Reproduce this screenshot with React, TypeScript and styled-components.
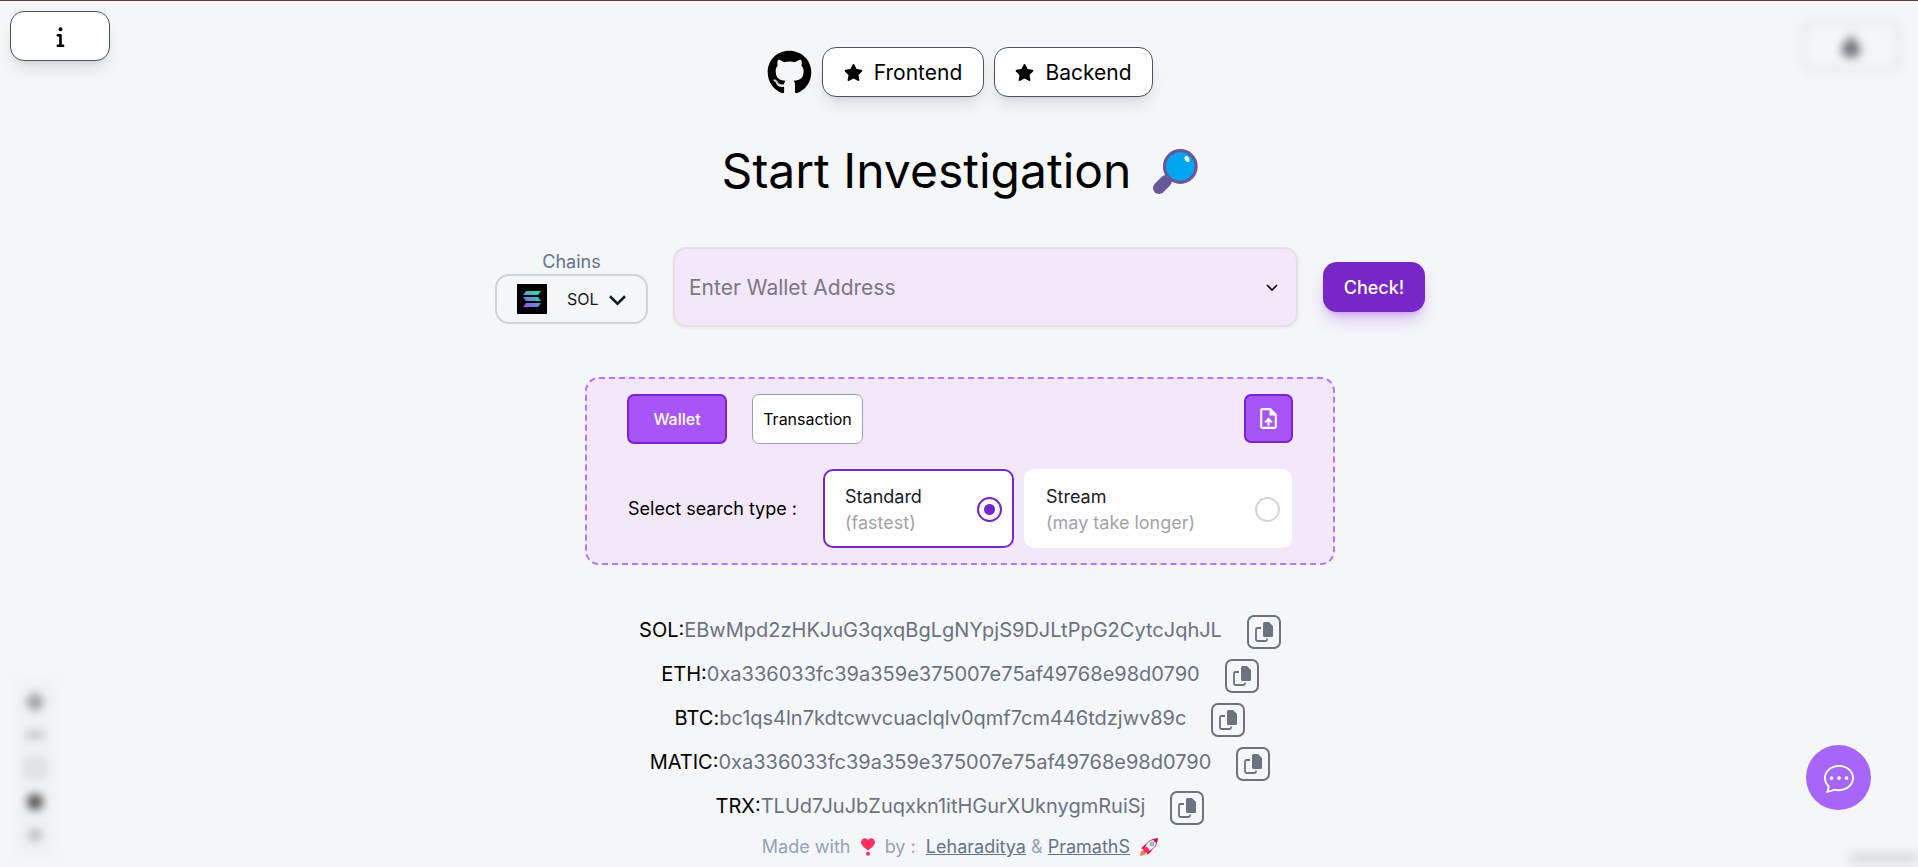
import React, { useState } from "react";
import styled, { createGlobalStyle, css } from "styled-components";
import { FaGithub, FaStar } from "react-icons/fa";
import { FaInfo } from "react-icons/fa6";
import { MdUploadFile } from "react-icons/md";
import { BsChatDots } from "react-icons/bs";

const GlobalStyle = createGlobalStyle`
  *, *::before, *::after { box-sizing: border-box; }
  body {
    margin: 0;
    background: #f4f6f8;
    color: #000;
    font-family: Inter, "Liberation Sans", sans-serif;
  }
  button, input, select { font: inherit; color: inherit; }
  svg { display: block; flex: none; }
`;

const Page = styled.div`
  position: relative;
  min-height: 100vh;
  overflow: hidden;
  border-top: 1px solid #5a3e42;
`;

const Canvas = styled.div`
  position: absolute;
  inset: 0;
  filter: blur(5px);
  pointer-events: none;
`;

const CanvasControls = styled.div`
  position: absolute;
  left: 15px;
  bottom: 10px;
  width: 40px;
  padding: 14px 0;
  display: flex;
  flex-direction: column;
  align-items: center;
  gap: 16px;
  background: #f1f2f4;
`;

const CanvasButton = styled.div`
  position: absolute;
  top: 18px;
  right: 16px;
  width: 102px;
  height: 54px;
  border-radius: 14px;
  border: 6px solid #ebecef;
  display: flex;
  align-items: center;
  justify-content: center;
`;

const CanvasCredit = styled.div`
  position: absolute;
  right: 0;
  bottom: 4px;
  width: 68px;
  height: 10px;
  background: #d9dadd;
`;

const raised = css`
  border: 1px solid #475569;
  border-radius: 14px;
  background: #fff;
  box-shadow: 0 10px 15px -3px rgba(0, 0, 0, 0.1), 0 4px 6px -4px rgba(0, 0, 0, 0.1);
  cursor: pointer;
`;

const InfoButton = styled.button`
  ${raised}
  position: absolute;
  top: 10px;
  left: 10px;
  width: 100px;
  height: 50px;
  display: flex;
  align-items: center;
  justify-content: center;
`;

const ChatButton = styled.button`
  position: absolute;
  right: 47px;
  bottom: 57px;
  width: 65px;
  height: 65px;
  border: 0;
  border-radius: 50%;
  background: #a666fa;
  color: #fff;
  display: flex;
  align-items: center;
  justify-content: center;
  cursor: pointer;
`;

const Main = styled.main`
  position: relative;
  display: flex;
  flex-direction: column;
  align-items: center;
  padding: 46px 0 0 2px;
`;

const RepoBar = styled.nav`
  display: flex;
  align-items: center;
  gap: 10px;
`;

const RepoLink = styled.a<{ $width: number }>`
  ${raised}
  width: ${(p) => p.$width}px;
  height: 50px;
  display: flex;
  align-items: center;
  justify-content: center;
  gap: 11px;
  color: #000;
  font-size: 21px;
  text-decoration: none;
`;

const Title = styled.h1`
  margin: 38px 0 0;
  display: flex;
  align-items: center;
  gap: 22px;
  font-size: 48px;
  line-height: 72px;
  font-weight: 400;
`;

const SearchForm = styled.form`
  margin-top: 40px;
  display: flex;
  align-items: center;
  gap: 25px;
`;

const ChainField = styled.div`
  display: flex;
  flex-direction: column;
  align-items: center;
  color: #64748b;
`;

const ChainLabel = styled.label`
  font-size: 18px;
  line-height: 24px;
`;

const ChainBox = styled.div`
  width: 153px;
  height: 50px;
  padding: 0 20px;
  display: flex;
  align-items: center;
  border: 2px solid #d2d3d6;
  border-radius: 14px;
  color: #111827;
`;

const ChainSelect = styled.select`
  width: 42px;
  margin: 0 0 0 20px;
  padding: 0;
  border: 0;
  background: none;
  appearance: none;
  font-size: 16px;
  outline: none;
`;

const AddressBox = styled.div`
  width: 625px;
  height: 80px;
  padding: 0 16px 0 14px;
  display: flex;
  align-items: center;
  background: #f2e8fa;
  border: 2px solid #e3e1e6;
  border-radius: 14px;
  box-shadow: 0 1px 3px rgba(0, 0, 0, 0.08);
`;

const AddressInput = styled.input`
  flex: 1;
  min-width: 0;
  padding: 0;
  border: 0;
  outline: none;
  background: none;
  font-size: 21px;
  &::placeholder { color: #7a7880; opacity: 1; }
`;

const HistoryButton = styled.button`
  width: 16px;
  height: 32px;
  padding: 0;
  border: 0;
  background: none;
  display: flex;
  align-items: center;
  justify-content: center;
`;

const CheckButton = styled.button`
  width: 102px;
  height: 50px;
  padding: 0;
  border: 0;
  border-radius: 14px;
  background: #7726c8;
  color: #fff;
  font-size: 18px;
  font-weight: 500;
  box-shadow: 0 10px 15px -3px rgba(147, 51, 234, 0.3), 0 4px 6px -4px rgba(147, 51, 234, 0.4);
  cursor: pointer;
`;

const Panel = styled.section`
  margin-top: 50px;
  width: 750px;
  padding: 15px 40px;
  display: flex;
  flex-direction: column;
  gap: 25px;
  background: #f2e8fa;
  border: 2px dashed #b975fa;
  border-radius: 14px;
`;

const PanelRow = styled.div`
  display: flex;
  align-items: center;
`;

const ModeButton = styled.button<{ $active?: boolean; $width: number }>`
  width: ${(p) => p.$width}px;
  height: 50px;
  margin-right: 25px;
  padding: 0;
  border-radius: 7px;
  border: ${(p) => (p.$active ? "2px solid #7e22ce" : "1px solid #94a3b8")};
  background: ${(p) => (p.$active ? "#a855f7" : "#fff")};
  color: ${(p) => (p.$active ? "#fff" : "#000")};
  font-size: 16px;
  font-weight: ${(p) => (p.$active ? 500 : 400)};
  cursor: pointer;
`;

const UploadButton = styled.button`
  width: 49px;
  height: 49px;
  margin-left: auto;
  align-self: flex-start;
  padding: 0;
  display: flex;
  align-items: center;
  justify-content: center;
  border: 2px solid #7e22ce;
  border-radius: 7px;
  background: #a855f7;
  color: #fff;
  cursor: pointer;
`;

const TypeLegend = styled.span`
  width: 196px;
  padding-left: 1px;
  font-size: 18px;
`;

const TypeOption = styled.label<{ $active: boolean; $width: number }>`
  width: ${(p) => p.$width}px;
  height: 79px;
  padding: 2px 10px 0 20px;
  display: flex;
  align-items: center;
  justify-content: space-between;
  border: 2px solid ${(p) => (p.$active ? "#7726c8" : "#fff")};
  border-radius: 10px;
  background: #fff;
  color: #1a2029;
  font-size: 18px;
  line-height: 26px;
  & + & { margin-left: 10px; }
`;

const TypeHint = styled.span`
  display: block;
  color: #a3a2aa;
`;

const Radio = styled.input`
  appearance: none;
  width: 25px;
  height: 25px;
  margin: 0;
  border: 2px solid #d4d4d8;
  border-radius: 50%;
  &:checked {
    border-color: #7726c8;
    background: radial-gradient(circle, #7726c8 5px, #fff 6px);
  }
`;

const WalletList = styled.ul`
  margin: 50px 0 0;
  padding: 0;
  list-style: none;
  display: flex;
  flex-direction: column;
  align-items: center;
  gap: 10px;
`;

const WalletRow = styled.li`
  height: 34px;
  display: flex;
  gap: 25px;
  font-size: 20px;
  line-height: 30px;
`;

const WalletAddress = styled.span`
  color: #6b7280;
`;

const CopyButton = styled.button`
  width: 34px;
  height: 34px;
  padding: 0;
  display: flex;
  align-items: center;
  justify-content: center;
  border: 2px solid #6b7280;
  border-radius: 7px;
  background: none;
  color: #6b7280;
  cursor: pointer;
`;

const Footer = styled.footer`
  margin-top: 8px;
  display: flex;
  align-items: center;
  color: #94a3b8;
  font-size: 18px;
  line-height: 28px;
  white-space: pre;
`;

const AuthorLink = styled.a`
  color: #64748b;
  text-decoration: underline;
`;

const Magnifier = () => (
  <svg width="45" height="45" viewBox="0 0 45 45" aria-hidden="true">
    <path d="M6 39 L13 32" stroke="#66589b" strokeWidth="12" strokeLinecap="round" />
    <path d="M13 32 L21 24" stroke="#66589b" strokeWidth="5" />
    <circle cx="27.300" cy="17.500" r="15.800" fill="#00a6ed" stroke="#66589b" strokeWidth="3.200" />
    <ellipse cx="34" cy="10" rx="2.200" ry="3.200" fill="#fff" transform="rotate(-30 34 10)" />
  </svg>
);

const SolanaLogo = () => (
  <svg width="30" height="30" viewBox="0 0 30 30" aria-hidden="true">
    <defs>
      <linearGradient id="sol" x1="8" y1="24" x2="22" y2="6" gradientUnits="userSpaceOnUse">
        <stop offset="0" stopColor="#9945ff" />
        <stop offset="0.5" stopColor="#5a9bd0" />
        <stop offset="1" stopColor="#14f195" />
      </linearGradient>
    </defs>
    <rect width="30" height="30" fill="#000" />
    <path fill="url(#sol)" d="M9 7h15l-3 4H6zM6 13h15l3 4H9zM9 19h15l-3 4H6z" />
  </svg>
);

const CopyIcon = () => (
  <svg width="20" height="22" viewBox="0 0 20 22" aria-hidden="true">
    <path d="M10.500 1h4.500l4 4v9.500a1.500 1.500 0 0 1-1.500 1.500h-7A1.500 1.500 0 0 1 9 14.500v-12A1.500 1.500 0 0 1 10.500 1z" fill="currentColor" />
    <path d="M7 7H3.500a1.500 1.500 0 0 0-1.500 1.500v10a1.500 1.500 0 0 0 1.500 1.500h8a1.500 1.500 0 0 0 1.500-1.500V17.500" fill="none" stroke="currentColor" strokeWidth="1.800" />
  </svg>
);

const Heart = () => (
  <svg width="14" height="18" viewBox="0 0 14 18" aria-hidden="true">
    <path d="M7 12.500C4 10 0 7.500 0 4A3.800 3.800 0 0 1 7 2a3.800 3.800 0 0 1 7 2c0 3.500-4 6-7 8.500z" fill="#ff2f5f" />
    <circle cx="7" cy="15.800" r="2" fill="#ff2f5f" />
  </svg>
);

const Rocket = () => (
  <svg width="18" height="18" viewBox="0 0 18 18" aria-hidden="true">
    <path d="M1 10.500l4-4 3 .500-4 4zM7.500 17l4-4-.500-3-4 4z" fill="#ca0b4a" />
    <path d="M0 18l1-5 3-1 2 3-1.500 2z" fill="#ff8257" />
    <path d="M4 11C6 5 10 1 17 1c0 7-4 11-10 13z" fill="#f4f4f6" stroke="#ca0b4a" strokeWidth="0.800" />
    <path d="M12.500 1.500L18 0l-1.500 5.500z" fill="#ca0b4a" />
    <path d="M3 11l3.500-2.500 3 3L7 15l-3-1z" fill="#f92f60" />
    <circle cx="12" cy="6" r="2" fill="#86c9e8" stroke="#6f8fb0" strokeWidth="0.600" />
  </svg>
);

const Chevron = ({ width, stroke }: { width: number; stroke: number }) => (
  <svg width={width} height={width} viewBox={`0 0 ${width} ${width}`} aria-hidden="true">
    <path
      d={`M1 ${width / 4 + 1}L${width / 2} ${(width * 3) / 4}L${width - 1} ${width / 4 + 1}`}
      fill="none"
      stroke="currentColor"
      strokeWidth={stroke}
    />
  </svg>
);

const wallets = [
  { chain: "SOL", address: "EBwMpd2zHKJuG3qxqBgLgNYpjS9DJLtPpG2CytcJqhJL" },
  { chain: "ETH", address: "0xa336033fc39a359e375007e75af49768e98d0790" },
  { chain: "BTC", address: "bc1qs4ln7kdtcwvcuaclqlv0qmf7cm446tdzjwv89c" },
  { chain: "MATIC", address: "0xa336033fc39a359e375007e75af49768e98d0790" },
  { chain: "TRX", address: "TLUd7JuJbZuqxkn1itHGurXUknygmRuiSj" },
];

const searchTypes = [
  { id: "standard", name: "Standard", hint: "(fastest)", width: 191 },
  { id: "stream", name: "Stream", hint: "(may take longer)", width: 268 },
];

export default function App() {
  const [type, setType] = useState("standard");
  return (
    <>
      <GlobalStyle />
      <Page>
        <Canvas aria-hidden="true">
          <CanvasButton>
            <svg width="20" height="22" viewBox="0 0 20 22"><path d="M10 0l10 14-4 8H4l-4-8z" fill="#6a6f73" /></svg>
          </CanvasButton>
          <CanvasControls>
            <svg width="18" height="18" viewBox="0 0 18 18"><path d="M6 0h6v6h6v6h-6v6H6v-6H0V6h6z" fill="#8c8d90" /></svg>
            <svg width="18" height="16" viewBox="0 0 18 16"><path d="M0 5h18v6H0z" fill="#b4b5b8" /></svg>
            <svg width="20" height="18" viewBox="0 0 20 18"><path d="M2 2h16v14H2z" fill="none" stroke="#cbccd0" strokeWidth="4" /></svg>
            <svg width="18" height="18" viewBox="0 0 18 18"><circle cx="9" cy="9" r="8" fill="#4c4c4c" /></svg>
            <svg width="16" height="16" viewBox="0 0 16 16"><circle cx="8" cy="8" r="7" fill="#bbbcbf" /></svg>
          </CanvasControls>
          <CanvasCredit />
        </Canvas>

        <Main>
          <RepoBar>
            <FaGithub size={45} />
            <RepoLink href="#frontend" $width={162}><FaStar size={19} />Frontend</RepoLink>
            <RepoLink href="#backend" $width={159}><FaStar size={19} />Backend</RepoLink>
          </RepoBar>

          <Title>Start Investigation <Magnifier /></Title>

          <SearchForm onSubmit={(e) => e.preventDefault()}>
            <ChainField>
              <ChainLabel htmlFor="chain">Chains</ChainLabel>
              <ChainBox>
                <SolanaLogo />
                <ChainSelect id="chain" defaultValue="SOL">
                  {wallets.map((w) => <option key={w.chain}>{w.chain}</option>)}
                </ChainSelect>
                <Chevron width={17} stroke={2.5} />
              </ChainBox>
            </ChainField>
            <AddressBox>
              <AddressInput aria-label="Wallet address" placeholder="Enter Wallet Address" />
              <HistoryButton type="button" aria-label="Show recent addresses">
                <Chevron width={12} stroke={1.6} />
              </HistoryButton>
            </AddressBox>
            <CheckButton>Check!</CheckButton>
          </SearchForm>

          <Panel>
            <PanelRow>
              <ModeButton $active $width={100}>Wallet</ModeButton>
              <ModeButton $width={111}>Transaction</ModeButton>
              <UploadButton aria-label="Upload file"><MdUploadFile size={25} /></UploadButton>
            </PanelRow>
            <PanelRow role="radiogroup" aria-labelledby="search-type">
              <TypeLegend id="search-type">Select search type :</TypeLegend>
              {searchTypes.map((t) => (
                <TypeOption key={t.id} $active={type === t.id} $width={t.width}>
                  <span>{t.name}<TypeHint>{t.hint}</TypeHint></span>
                  <Radio type="radio" name="type" checked={type === t.id} onChange={() => setType(t.id)} />
                </TypeOption>
              ))}
            </PanelRow>
          </Panel>

          <WalletList>
            {wallets.map((w) => (
              <WalletRow key={w.chain}>
                <span>{w.chain}:<WalletAddress>{w.address}</WalletAddress></span>
                <CopyButton aria-label={`Copy ${w.chain} address`}><CopyIcon /></CopyButton>
              </WalletRow>
            ))}
          </WalletList>

          <Footer>
            <span>{"Made with  "}</span><Heart /><span>{"  by :  "}</span>
            <AuthorLink href="#leharaditya">Leharaditya</AuthorLink><span>{" & "}</span>
            <AuthorLink href="#pramaths">PramathS</AuthorLink><span>{"\u00a0\u00a0"}</span><Rocket />
          </Footer>
        </Main>

        <InfoButton aria-label="Information"><FaInfo size={21} /></InfoButton>
        <ChatButton aria-label="Open chat"><BsChatDots size={30} /></ChatButton>
      </Page>
    </>
  );
}
